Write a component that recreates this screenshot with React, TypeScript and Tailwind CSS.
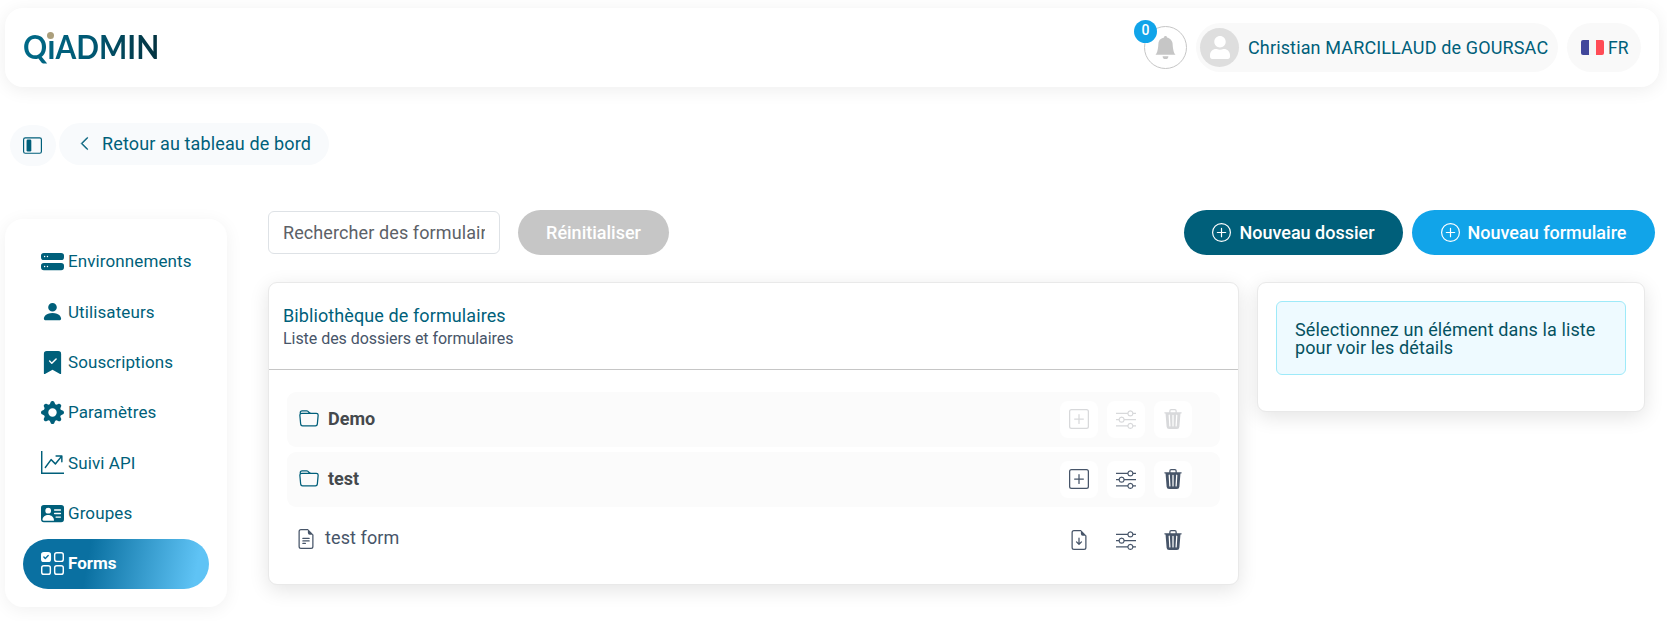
import React, { useState } from 'react';
import {
  BsBellFill,
  BsBookmarkCheckFill,
  BsChevronLeft,
  BsFileEarmarkArrowDown,
  BsFileEarmarkText,
  BsFolder,
  BsGearFill,
  BsGraphUpArrow,
  BsHddStackFill,
  BsLayoutSidebarInset,
  BsPersonFill,
  BsPersonVcardFill,
  BsPlusCircle,
  BsPlusSquare,
  BsSliders,
  BsTrash3Fill,
  BsUiChecksGrid,
} from 'react-icons/bs';
import { FaUser } from 'react-icons/fa';

const menuItems = [
  { label: 'Environnements', icon: BsHddStackFill },
  { label: 'Utilisateurs', icon: BsPersonFill },
  { label: 'Souscriptions', icon: BsBookmarkCheckFill },
  { label: 'Paramètres', icon: BsGearFill },
  { label: 'Suivi API', icon: BsGraphUpArrow },
  { label: 'Groupes', icon: BsPersonVcardFill },
  { label: 'Forms', icon: BsUiChecksGrid },
];

const folders = [
  { name: 'Demo', locked: true },
  { name: 'test', locked: false },
];

const Logo = () => (
  <div className="relative ml-[17.5px] h-[46px] font-['Lato'] text-[32px] font-bold leading-[40px]">
    <span className="inline-block origin-left scale-x-[0.935] bg-gradient-to-r from-[#006a88] via-[#005873] to-[#03323f] bg-clip-text text-transparent">
      Q<span className="text-[35px] leading-[40px]">i</span>ADMIN
    </span>
    <span className="absolute left-[24px] top-[7px] size-[7.5px] rounded-full bg-[#ab9f7c] ring-[1.5px] ring-white" />
  </div>
);

const Header = () => (
  <header className="flex h-[79px] items-center justify-between rounded-[18px] bg-white pr-[18px] shadow-[0_3px_18px_rgba(0,0,0,0.07)]">
    <Logo />
    <div className="flex h-[49px] items-center text-[#005f7a]">
      <button className="relative mr-[9px] flex size-[43px] items-center justify-center rounded-full border border-[#c6c6c6]">
        <BsBellFill className="size-[23px] text-[#c6c6c6]" />
        <span className="absolute -left-[11px] -top-[7px] flex size-[23px] items-center justify-center rounded-full bg-[#11a4e9] pb-[2px] text-[14px] font-medium text-white">
          0
        </span>
      </button>
      <button className="mr-[9px] flex h-full w-[362px] items-center rounded-full bg-[#f9f9f9] pl-[4px]">
        <span className="mr-[9px] flex size-[39px] items-center justify-center rounded-full bg-[#dedede]">
          <FaUser className="h-[23px] w-[20px] text-white" />
        </span>
        <span className="whitespace-nowrap text-[18px] tracking-[0.14px]">Christian MARCILLAUD de GOURSAC</span>
      </button>
      <button className="flex h-full w-[74px] items-center rounded-full bg-[#f9f9f9] pl-[14px]">
        <span className="mr-[4px] flex h-[15px] w-[23px] overflow-hidden rounded-[2px]">
          <span className="flex-1 bg-[#41479b]" />
          <span className="flex-1 bg-[#f5f5f5]" />
          <span className="flex-1 bg-[#ff4b55]" />
        </span>
        <span className="pt-px text-[17.5px]">FR</span>
      </button>
    </div>
  </header>
);

const Sidebar = ({ active, onSelect }: { active: string; onSelect: (label: string) => void }) => (
  <nav className="flex h-[388px] w-[222px] shrink-0 flex-col rounded-[18px] bg-white px-[18px] pt-[18px] shadow-[0_3px_18px_rgba(0,0,0,0.06)]">
    {menuItems.map(({ label, icon: Icon }) => (
      <button
        key={label}
        onClick={() => onSelect(label)}
        className={
          active === label
            ? 'flex h-[50.3px] shrink-0 items-center gap-1 rounded-full bg-[linear-gradient(100deg,#0a70a1_0%,#0a70a1_35%,#5fc3f5_92%)] pb-px pl-[18px] text-[17px] font-bold text-white'
            : 'flex h-[50.3px] shrink-0 items-center gap-1 rounded-full pb-px pl-[18px] text-[17px] tracking-[0.1px] text-[#005f7a]'
        }
      >
        <Icon className="size-[23px]" />
        <span className="pt-px">{label}</span>
      </button>
    ))}
  </nav>
);

const RowAction = ({ icon: Icon, disabled }: { icon: React.ElementType; disabled?: boolean }) => (
  <button
    disabled={disabled}
    className="flex h-[37px] w-[38px] items-center justify-center rounded-[8px] bg-white pb-px pr-px text-[#475569] disabled:text-[#d8d9db]"
  >
    <Icon className="size-[20px]" />
  </button>
);

const Library = () => (
  <section className="h-[302.5px] w-[971px] rounded-[9px] border border-[#e9e9e9] bg-white shadow-[0_5px_20px_rgba(0,0,0,0.11)]">
    <div className="h-[87px] border-b border-[#c6c6c6] pl-[14px] pt-[22px]">
      <h2 className="text-[18px] leading-[22px] tracking-[0.1px] text-[#005f7a]">Bibliothèque de formulaires</h2>
      <p className="text-[16px] leading-[23px] tracking-[-0.05px] text-[#475569]">Liste des dossiers et formulaires</p>
    </div>
    <div className="flex flex-col gap-[5px] px-[18px] pt-[22px]">
      {folders.map((folder) => (
        <div key={folder.name} className="flex h-[55px] items-center rounded-[9px] bg-[#fbfbfb] pl-[12px] pr-[28px]">
          <BsFolder className="mb-[2px] size-[20px] text-[#005f7a]" />
          <span className="ml-[9px] flex-1 pb-[2px] text-[18px] font-bold text-[#45494d]">{folder.name}</span>
          <div className="flex gap-[9px]">
            <RowAction icon={BsPlusSquare} disabled={folder.locked} />
            <RowAction icon={BsSliders} disabled={folder.locked} />
            <RowAction icon={BsTrash3Fill} disabled={folder.locked} />
          </div>
        </div>
      ))}
      <div className="flex h-[55px] items-center pl-[9px] pr-[28px]">
        <BsFileEarmarkText className="mb-px size-[20px] text-[#475569]" />
        <span className="ml-[9px] flex-1 pb-[5px] text-[18px] tracking-[0.1px] text-[#475569]">test form</span>
        <div className="flex gap-[9px] pt-[2px]">
          <RowAction icon={BsFileEarmarkArrowDown} />
          <RowAction icon={BsSliders} />
          <RowAction icon={BsTrash3Fill} />
        </div>
      </div>
    </div>
  </section>
);

const App = () => {
  const [active, setActive] = useState('Forms');
  const [search, setSearch] = useState('');

  return (
    <div className="h-[621px] w-[1667px] overflow-hidden bg-white pl-[5px] pr-[8px] pt-[8px] font-['Roboto',sans-serif]">
      <Header />

      <div className="mt-[36px] flex h-[42px] items-center gap-[3px] pl-[5px] text-[#005f7a]">
        <button className="mt-[2px] flex h-[41px] w-[46px] items-center justify-center rounded-full bg-[#f8fafc] pr-px">
          <BsLayoutSidebarInset className="size-[19px]" />
        </button>
        <button className="flex h-[42px] w-[270px] items-center rounded-full bg-[#f8fafc] pb-px pl-[18px]">
          <BsChevronLeft className="mr-[10px] size-[15px] stroke-[0.6]" />
          <span className="pb-px text-[18px] tracking-[0.13px]">Retour au tableau de bord</span>
        </button>
      </div>

      <div className="mt-[45px] flex items-start">
        <div className="pt-[9px]">
          <Sidebar active={active} onSelect={setActive} />
        </div>

        <main className="ml-[41px] flex-1">
          <div className="flex h-[45px] items-center pr-[4px]">
            <input
              value={search}
              onChange={(e) => setSearch(e.target.value)}
              placeholder="Rechercher des formulaires"
              className="h-[43px] w-[232px] rounded-[6px] border border-[#dee2e6] px-[14px] text-[18px] tracking-[0.1px] outline-none placeholder:text-[#5c6167]"
            />
            <button
              onClick={() => setSearch('')}
              className="ml-[18px] h-full w-[151px] rounded-full bg-[#c6c6c6] text-[18px] font-medium text-white"
            >
              Réinitialiser
            </button>
            <button className="ml-auto flex h-full w-[219px] items-center justify-center gap-[8px] rounded-full bg-[#005f7a] text-[18px] font-medium text-white">
              <BsPlusCircle className="size-[19px]" />
              <span>Nouveau dossier</span>
            </button>
            <button className="ml-[9px] flex h-full w-[243px] items-center justify-center gap-[8px] rounded-full bg-[#11a4e9] text-[18px] font-medium text-white">
              <BsPlusCircle className="size-[19px]" />
              <span>Nouveau formulaire</span>
            </button>
          </div>

          <div className="mt-[27px] flex items-start gap-[18px]">
            <Library />
            <aside className="h-[129.5px] w-[388px] rounded-[9px] border border-[#e9e9e9] bg-white p-[18px] shadow-[0_5px_20px_rgba(0,0,0,0.11)]">
              <div className="h-[74px] rounded-[6px] border border-[#9eeaf9] bg-[#eefaff] px-[18px] pt-[19px] text-[18px] leading-[18px] tracking-[0.12px] text-[#055160]">
                Sélectionnez un élément dans la liste pour voir les détails
              </div>
            </aside>
          </div>
        </main>
      </div>
    </div>
  );
};

export default App;
